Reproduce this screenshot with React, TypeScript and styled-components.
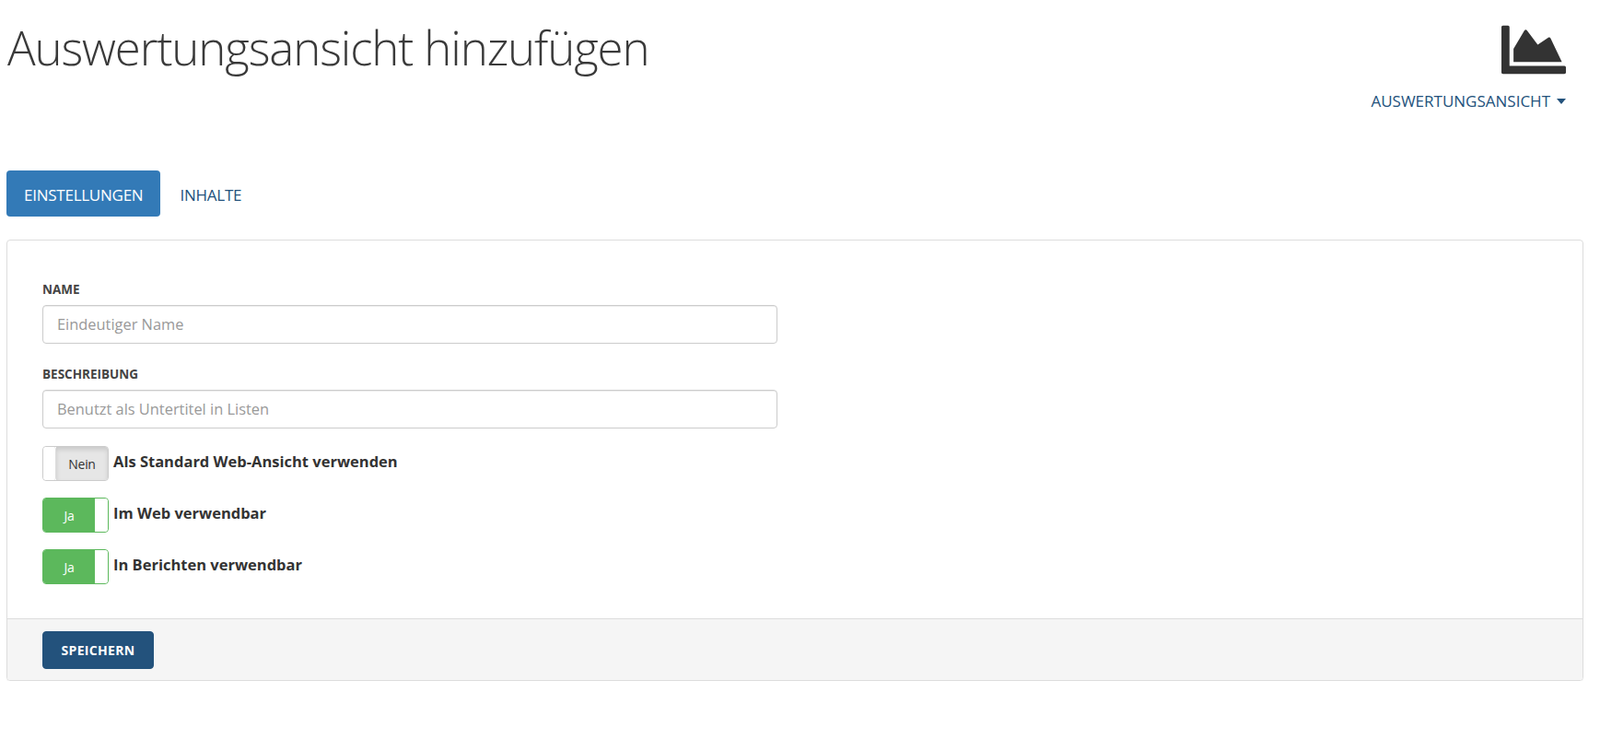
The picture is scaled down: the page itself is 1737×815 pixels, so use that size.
import React from "react";
import styled, { createGlobalStyle } from "styled-components";
import { FaChartArea } from "react-icons/fa";

const Global = createGlobalStyle`
  html, body { margin: 0; padding: 0; background: #fff; }
  body { font-family: "Open Sans", "Noto Sans", sans-serif; color: #333; }
  * { box-sizing: border-box; }
`;

const Page = styled.div`
  padding: 0 18px 0 7px;
  width: 1737px;
`;

const Header = styled.header`
  display: flex;
  justify-content: space-between;
  align-items: flex-start;
  height: 185px;
`;

const Title = styled.h1`
  margin: 15px 0 0 1px;
  font-family: "Open Sans", sans-serif;
  font-weight: 300;
  font-size: 51px;
  line-height: 72px;
  letter-spacing: -1.13px;
  color: #3a3a3a;
`;

const HeaderTools = styled.div`
  display: flex;
  flex-direction: column;
  align-items: flex-end;
  padding-top: 19px;
  margin-right: 19px;
`;

const ChartIcon = styled(FaChartArea)`
  display: block;
  font-size: 70px;
  color: #333;
`;

const TypeMenu = styled.a`
  display: flex;
  align-items: center;
  gap: 7px;
  margin-top: 10px;
  font-size: 17px;
  line-height: 22px;
  color: #23527c;
`;

const Caret = styled.span`
  width: 0;
  height: 0;
  border-left: 5.5px solid transparent;
  border-right: 5.5px solid transparent;
  border-top: 6px solid #23527c;
`;

const Tabs = styled.nav`
  display: flex;
  gap: 2px;
  margin-bottom: 25px;
`;

const Tab = styled.a<{ $active?: boolean }>`
  height: 50px;
  padding: 2px 19px 0;
  display: flex;
  align-items: center;
  border-radius: 4px;
  font-size: 17px;
  letter-spacing: -0.25px;
  background: ${(p) => (p.$active ? "#337ab7" : "transparent")};
  color: ${(p) => (p.$active ? "#fff" : "#23527c")};
`;

const Card = styled.section`
  border: 1px solid #ddd;
  border-radius: 4px;
  height: 479px;
  display: flex;
  flex-direction: column;
  box-shadow: 0 1px 1px rgba(0, 0, 0, 0.05);
`;

const CardBody = styled.div`
  flex: 1;
  padding: 43px 38px 0;
`;

const Field = styled.div`
  width: 798px;
  margin-bottom: 19px;
  & + & {
    margin-top: 23px;
  }
`;

const FieldLabel = styled.label`
  display: block;
  font-size: 13.5px;
  font-weight: 700;
  line-height: 20px;
  color: #444;
  margin-bottom: 6.5px;
`;

const TextInput = styled.input`
  display: block;
  width: 100%;
  height: 42.5px;
  padding: 0 15px;
  border: 1px solid #ccc;
  border-radius: 4px;
  font-family: inherit;
  font-size: 16.4px;
  outline: none;
  box-shadow: inset 0 1px 1px rgba(0, 0, 0, 0.075);
  &::placeholder { color: #999; opacity: 1; }
`;

const SwitchRow = styled.div`
  display: flex;
  align-items: flex-start;
  gap: 5px;
  margin-bottom: 18px;
`;

const Switch = styled.div<{ $on?: boolean }>`
  width: 72px;
  height: 38px;
  display: flex;
  flex-direction: ${(p) => (p.$on ? "row" : "row-reverse")};
  border: 1px solid ${(p) => (p.$on ? "#5cb85c" : "#ccc")};
  border-radius: 4px;
  overflow: hidden;
  flex-shrink: 0;
`;

const SwitchFace = styled.span<{ $on?: boolean }>`
  flex: 1;
  display: flex;
  align-items: center;
  justify-content: center;
  font-size: 14px;
  letter-spacing: -0.3px;
  background: ${(p) => (p.$on ? "#5cb85c" : "#e6e6e6")};
  color: ${(p) => (p.$on ? "#fff" : "#333")};
  box-shadow: ${(p) => (p.$on ? "none" : "inset 0 3px 5px rgba(0,0,0,.125)")};
`;

const SwitchHandle = styled.span<{ $on?: boolean }>`
  width: 14px;
  background: #fff;
  border-radius: 3px;
  ${(p) => (p.$on ? "" : "border-right: 1px solid #ddd;")}
`;

const SwitchLabel = styled.span`
  font-size: 16.5px;
  font-weight: 700;
  line-height: 34px;
  color: #333;
`;

const CardFooter = styled.footer`
  height: 67px;
  background: #f5f5f5;
  border-top: 1px solid #ddd;
  border-radius: 0 0 3px 3px;
  padding: 13px 38px 0;
`;

const SaveButton = styled.button`
  height: 41px;
  width: 121px;
  border: 1px solid #23527c;
  border-radius: 4px;
  background: #23527c;
  color: #fff;
  font-family: inherit;
  font-size: 14px;
  font-weight: 700;
  letter-spacing: 0.3px;
`;

const toggles = [
  { label: "Als Standard Web-Ansicht verwenden", on: false },
  { label: "Im Web verwendbar", on: true },
  { label: "In Berichten verwendbar", on: true },
];

export default function App() {
  return (
    <Page>
      <Global />
      <Header>
        <Title>Auswertungsansicht hinzufügen</Title>
        <HeaderTools>
          <ChartIcon />
          <TypeMenu>
            AUSWERTUNGSANSICHT <Caret />
          </TypeMenu>
        </HeaderTools>
      </Header>
      <Tabs>
        <Tab $active>EINSTELLUNGEN</Tab>
        <Tab>INHALTE</Tab>
      </Tabs>
      <Card>
        <CardBody>
          <Field>
            <FieldLabel>NAME</FieldLabel>
            <TextInput placeholder="Eindeutiger Name" />
          </Field>
          <Field>
            <FieldLabel>BESCHREIBUNG</FieldLabel>
            <TextInput placeholder="Benutzt als Untertitel in Listen" />
          </Field>
          {toggles.map((t) => (
            <SwitchRow key={t.label}>
              <Switch $on={t.on}>
                <SwitchFace $on={t.on}>{t.on ? "Ja" : "Nein"}</SwitchFace>
                <SwitchHandle $on={t.on} />
              </Switch>
              <SwitchLabel>{t.label}</SwitchLabel>
            </SwitchRow>
          ))}
        </CardBody>
        <CardFooter>
          <SaveButton>SPEICHERN</SaveButton>
        </CardFooter>
      </Card>
    </Page>
  );
}
